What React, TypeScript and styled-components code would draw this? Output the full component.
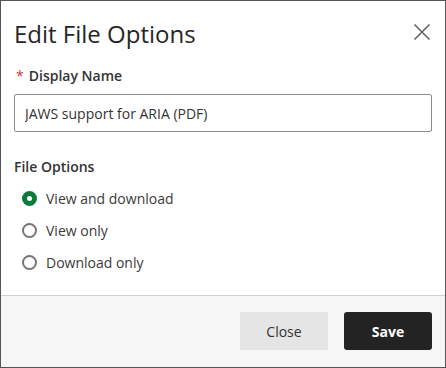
import React, { useState } from "react";
import styled, { createGlobalStyle } from "styled-components";

const Global = createGlobalStyle`
  html, body { margin: 0; padding: 0; background: #fff; }
  body { font-family: "Open Sans", "Noto Sans", Arial, sans-serif; }
  * { box-sizing: border-box; }
`;

const Dialog = styled.div`
  width: 446px;
  height: 368px;
  border: 1px solid #555;
  display: flex;
  flex-direction: column;
  background: #fff;
`;

const Header = styled.div`
  display: flex;
  align-items: flex-start;
  justify-content: space-between;
  padding: 16px 13px 0 13px;
`;

const Title = styled.h1`
  margin: 0;
  font-size: 24px;
  line-height: 34px;
  font-weight: 400;
  color: #262626;
`;

const CloseIcon = styled.button`
  border: none;
  background: transparent;
  padding: 0;
  width: 20px;
  height: 20px;
  margin-top: 5px;
  display: flex;
  align-items: center;
  justify-content: center;
  cursor: pointer;
`;

const Body = styled.div`
  padding: 15px 13px 0 13px;
  display: flex;
  flex-direction: column;
`;

const Label = styled.label`
  display: block;
  font-size: 14px;
  line-height: 20px;
  font-weight: 600;
  color: #333;
  padding-left: 2px;
`;

const Required = styled.span`
  color: #c23b3b;
  margin-right: 5px;
  font-weight: 400;
`;

const Input = styled.input`
  margin-top: 8px;
  width: 100%;
  height: 38px;
  border: 1px solid #8c8c8c;
  border-radius: 2px;
  padding: 0 10px;
  font-family: inherit;
  font-size: 14px;
  color: #333;
  outline: none;
`;

const Fieldset = styled.fieldset`
  border: none;
  margin: 25px 0 0 0;
  padding: 0;
`;

const Legend = styled.legend`
  display: block;
  font-size: 14px;
  line-height: 20px;
  font-weight: 600;
  color: #333;
  padding: 0;
  margin-bottom: 5px;
`;

const RadioRow = styled.label`
  display: flex;
  align-items: center;
  height: 32px;
  padding-left: 8px;
  gap: 9px;
  font-size: 14px;
  color: #3a3a3a;
  cursor: pointer;
`;

const RadioCircle = styled.span<{ $checked: boolean }>`
  width: 15px;
  height: 15px;
  border-radius: 50%;
  flex: none;
  background: #fff;
  border: ${(p) => (p.$checked ? "5px solid #0b7a3b" : "2px solid #757575")};
`;

const HiddenRadio = styled.input`
  position: absolute;
  opacity: 0;
  width: 0;
  height: 0;
`;

const Footer = styled.div`
  margin-top: auto;
  border-top: 1px solid #cfcfcf;
  background: #f6f6f6;
  height: 72px;
  display: flex;
  align-items: center;
  justify-content: flex-end;
  gap: 16px;
  padding: 0 13px 1px 0;
`;

const Button = styled.button<{ $primary?: boolean }>`
  width: 88px;
  height: 38px;
  border: none;
  border-radius: ${(p) => (p.$primary ? "3px" : "0")};
  background: ${(p) => (p.$primary ? "#232323" : "#e5e5e5")};
  color: ${(p) => (p.$primary ? "#fff" : "#333")};
  font-family: inherit;
  font-size: 14px;
  font-weight: ${(p) => (p.$primary ? 700 : 400)};
  cursor: pointer;
`;

const options = ["View and download", "View only", "Download only"];

export default function App() {
  const [value, setValue] = useState(options[0]);
  return (
    <>
      <Global />
      <Dialog>
        <Header>
          <Title>Edit File Options</Title>
          <CloseIcon aria-label="Close">
            <svg width="18" height="18" viewBox="0 0 18 18">
              <path d="M1.5 1.5 L16.5 16.5 M16.5 1.5 L1.5 16.5" stroke="#666" strokeWidth="1.6" fill="none" />
            </svg>
          </CloseIcon>
        </Header>
        <Body>
          <Label>
            <Required>*</Required>Display Name
          </Label>
          <Input defaultValue="JAWS support for ARIA (PDF)" />
          <Fieldset>
            <Legend>File Options</Legend>
            {options.map((o) => (
              <RadioRow key={o}>
                <HiddenRadio type="radio" name="opt" checked={value === o} onChange={() => setValue(o)} />
                <RadioCircle $checked={value === o} />
                {o}
              </RadioRow>
            ))}
          </Fieldset>
        </Body>
        <Footer>
          <Button>Close</Button>
          <Button $primary>Save</Button>
        </Footer>
      </Dialog>
    </>
  );
}
